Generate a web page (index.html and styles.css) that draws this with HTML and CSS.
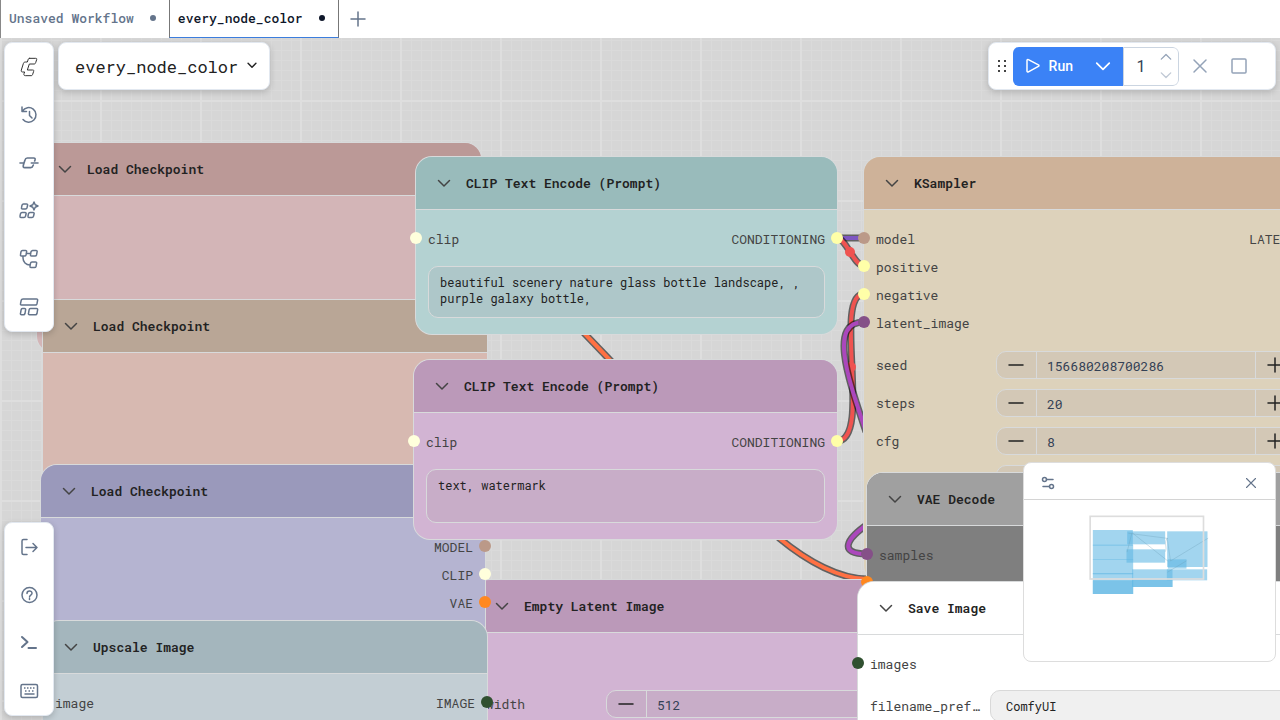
FILE: index.html
```html
<!DOCTYPE html>
<html lang="en">
<head>
<meta charset="utf-8">
<title>every_node_color</title>
<link rel="stylesheet" href="styles.css">
</head>
<body>
<svg class="defs" aria-hidden="true">
  <symbol id="chev" viewBox="0 0 14 14"><path d="M1.5 4.5 7 10l5.500-5.500"/></symbol>
  <symbol id="minus" viewBox="0 0 16 16"><path d="M1 8h14"/></symbol>
  <symbol id="plus" viewBox="0 0 16 16"><path d="M1 8h14M8 1v14"/></symbol>
  <symbol id="close" viewBox="0 0 16 16"><path d="m2 2 12 12M14 2 2 14"/></symbol>
</svg>

<header class="tabs">
  <button class="tab">Unsaved Workflow<span class="tab-dot"></span></button>
  <button class="tab active">every_node_color<span class="tab-dot"></span></button>
  <button class="tab-add" aria-label="New workflow"><svg class="ico16"><use href="#plus"/></svg></button>
</header>

<main class="workspace">
  <div class="canvas">
    <svg class="links" aria-hidden="true">
      <g class="link orange"><path class="edge" d="M562 272 632 345C690 410 750 474 779 500C808 524 840 541 867 541"/><path class="core" d="M562 272 632 345C690 410 750 474 779 500C808 524 840 541 867 541"/></g>
      <g class="link violet"><path class="edge" d="M837 200H864"/><path class="core" d="M837 200H864"/></g>
      <g class="link red"><path class="edge" d="M837 200C846 200 854 228 864 228"/><path class="core" d="M837 200C846 200 854 228 864 228"/><circle cx="850" cy="214" r="5"/></g>
      <g class="link red"><path class="edge" d="M864 256C832 256 873 403 837 403"/><path class="core" d="M864 256C832 256 873 403 837 403"/><circle cx="851" cy="329" r="5"/></g>
      <g class="link purple"><path class="edge" d="M864 284C828 284 848 340 866 394M868 486C846 501 838 516 867 516"/><path class="core" d="M864 284C828 284 848 340 866 394M868 486C846 501 838 516 867 516"/></g>
    </svg>

    <section class="node loader n-red">
      <h2 class="title"><svg class="ico14"><use href="#chev"/></svg>Load Checkpoint</h2>
    </section>
    <section class="node loader n-brown">
      <h2 class="title"><svg class="ico14"><use href="#chev"/></svg>Load Checkpoint</h2>
    </section>

    <section class="node n-latent">
      <h2 class="title"><svg class="ico14"><use href="#chev"/></svg>Empty Latent Image</h2>
      <div class="slots"><div class="slot"></div></div>
      <div class="widgets">
        <div class="widget"><label for="w">width</label><div class="number"><button aria-label="Decrease"><svg class="ico16"><use href="#minus"/></svg></button><input id="w" value="512"><button aria-label="Increase"><svg class="ico16"><use href="#plus"/></svg></button></div></div>
      </div>
    </section>

    <section class="node loader n-blue">
      <h2 class="title"><svg class="ico14"><use href="#chev"/></svg>Load Checkpoint</h2>
      <div class="slots">
        <div class="slot"><span class="out">MODEL<i class="dot model"></i></span></div>
        <div class="slot"><span class="out">CLIP<i class="dot clip"></i></span></div>
        <div class="slot"><span class="out">VAE<i class="dot vae"></i></span></div>
      </div>
    </section>

    <section class="node n-upscale">
      <h2 class="title"><svg class="ico14"><use href="#chev"/></svg>Upscale Image</h2>
      <div class="slots"><div class="slot"><span class="in">image</span><span class="out">IMAGE<i class="dot image"></i></span></div></div>
    </section>

    <section class="node n-teal">
      <h2 class="title"><svg class="ico14"><use href="#chev"/></svg>CLIP Text Encode (Prompt)</h2>
      <div class="slots"><div class="slot"><span class="in"><i class="dot clip"></i>clip</span><span class="out">CONDITIONING<i class="dot cond"></i></span></div></div>
      <div class="prompt"><textarea aria-label="Positive prompt">beautiful scenery nature glass bottle landscape, , purple galaxy bottle,</textarea></div>
    </section>
    <section class="node n-pink">
      <h2 class="title"><svg class="ico14"><use href="#chev"/></svg>CLIP Text Encode (Prompt)</h2>
      <div class="slots"><div class="slot"><span class="in"><i class="dot clip"></i>clip</span><span class="out">CONDITIONING<i class="dot cond"></i></span></div></div>
      <div class="prompt"><textarea aria-label="Negative prompt">text, watermark</textarea></div>
    </section>

    <section class="node n-sampler">
      <h2 class="title"><svg class="ico14"><use href="#chev"/></svg>KSampler</h2>
      <div class="slots">
        <div class="slot"><span class="in"><i class="dot model"></i>model</span><span class="out">LATENT</span></div>
        <div class="slot"><span class="in"><i class="dot cond"></i>positive</span></div>
        <div class="slot"><span class="in"><i class="dot cond"></i>negative</span></div>
        <div class="slot"><span class="in"><i class="dot latent"></i>latent_image</span></div>
      </div>
      <div class="widgets">
        <div class="widget"><label for="seed">seed</label><div class="number"><button aria-label="Decrease"><svg class="ico16"><use href="#minus"/></svg></button><input id="seed" value="156680208700286"><button aria-label="Increase"><svg class="ico16"><use href="#plus"/></svg></button></div></div>
        <div class="widget"><label for="steps">steps</label><div class="number"><button aria-label="Decrease"><svg class="ico16"><use href="#minus"/></svg></button><input id="steps" value="20"><button aria-label="Increase"><svg class="ico16"><use href="#plus"/></svg></button></div></div>
        <div class="widget"><label for="cfg">cfg</label><div class="number"><button aria-label="Decrease"><svg class="ico16"><use href="#minus"/></svg></button><input id="cfg" value="8"><button aria-label="Increase"><svg class="ico16"><use href="#plus"/></svg></button></div></div>
        <div class="widget"><span></span><div class="number select"><svg class="ico14"><use href="#chev"/></svg></div></div>
        <div class="widget"><span></span><div class="number select"><svg class="ico14"><use href="#chev"/></svg></div></div>
        <div class="widget"><span></span><div class="number"></div></div>
      </div>
    </section>

    <section class="node n-decode">
      <h2 class="title"><svg class="ico14"><use href="#chev"/></svg>VAE Decode</h2>
      <div class="slots">
        <div class="slot"><span class="in"><i class="dot latent"></i>samples</span></div>
        <div class="slot"><span class="in"><i class="dot vae"></i>vae</span></div>
      </div>
    </section>

    <section class="node n-save">
      <h2 class="title"><svg class="ico14"><use href="#chev"/></svg>Save Image</h2>
      <div class="slots"><div class="slot"><span class="in"><i class="dot image"></i>images</span></div></div>
      <div class="widgets"><div class="widget"><label for="prefix">filename_prefix</label><input class="text" id="prefix" value="ComfyUI"></div></div>
    </section>
  </div>

  <nav class="sidebar" aria-label="Sidebar">
    <div class="panel group">
      <button aria-label="Menu"><svg class="ico20 dark" viewBox="54 51 60 60"><path d="M86 55h18c3 0 4 1 3 4l-3 9c-1 3-2 4-5 4H85l-6 18h16c3 0 4 1 3 4l-3 9c-1 3-2 4-5 4H73c-4 0-5-2-4-6l2-5h-6c-4 0-5-2-4-6l6-19c1-4 3-5 7-5h5l2-6c1-4 2-5 5-5Z"/></svg></button>
      <button aria-label="Queue"><svg class="ico20" viewBox="0 0 20 20"><path d="M3.500 6A7.300 7.300 0 1 1 4 14.500M3 2v4.500h4.500M10.500 6.500v4L13 13"/></svg></button>
      <button aria-label="Nodes"><svg class="ico20" viewBox="55 338 60 60"><path class="wide" d="M58 368h12M92 368h20M70 368l3-9c1-4 3-6 7-6h19c4 0 5 2 4 6l-1 3M70 368l-2 7c-1 5 0 7 4 7h18c4 0 6-2 7-6l1-2"/></svg></button>
      <button aria-label="Models"><svg class="ico20" viewBox="0 0 20 20"><path d="M4.500 3h3c1 0 1.300.6 1.100 1.300l-.6 2.500c-.2.700-.7 1.200-1.500 1.200h-3c-.9 0-1.200-.6-1-1.300l.5-2.500C3.200 3.500 3.700 3 4.500 3ZM3 11.500h3c1 0 1.300.6 1.100 1.300l-.6 2.500c-.2.700-.7 1.200-1.500 1.200H2c-.9 0-1.200-.6-1-1.300l.5-2.500c.2-.7.700-1.200 1.500-1.200ZM11 11.500h3c1 0 1.300.6 1.100 1.300l-.6 2.500c-.2.700-.7 1.200-1.500 1.200h-3c-.9 0-1.200-.6-1-1.300l.5-2.500c.2-.7.700-1.200 1.500-1.200ZM15 1l1.200 2.800L19 5l-2.800 1.200L15 9l-1.200-2.800L11 5l2.800-1.200Z"/></svg></button>
      <button aria-label="Workflows"><svg class="ico20" viewBox="0 0 20 20"><path d="M3.500 1.500h3c1 0 1.300.6 1.100 1.300L7 6c-.2.700-.7 1-1.500 1h-3c-.9 0-1.200-.6-1-1.300l.5-3c.2-.8.700-1.200 1.500-1.200ZM13.500 1.500h3.500c1 0 1.300.6 1.100 1.300L17.500 6c-.2.700-.7 1-1.500 1h-3.500c-.9 0-1.200-.6-1-1.300l.5-3c.2-.8.700-1.200 2-1.200ZM13 13h3.500c1 0 1.300.6 1.100 1.300L17 17.500c-.2.700-.7 1-1.500 1H12c-.9 0-1.200-.6-1-1.300l.5-3c.2-.8.700-1.200 1.500-1.200ZM7.500 4.500h4M4 7v2c0 4 3 7 7 7"/></svg></button>
      <button aria-label="Templates"><svg class="ico20" viewBox="0 0 20 20"><path d="M4 2h13.500c1 0 1.300.6 1.100 1.300L18 6.700c-.2.700-.7 1.300-1.500 1.300H2.500c-.9 0-1.200-.6-1-1.300l.7-3.400C2.400 2.500 3 2 4 2ZM3.500 11.500h2c1 0 1.300.6 1.100 1.300L6 16.500c-.2.700-.7 1.300-1.500 1.300h-2c-.9 0-1.200-.6-1-1.300l.6-3.700c.1-.8.600-1.300 1.400-1.300ZM11.500 11.500h6c1 0 1.300.6 1.100 1.300l-.6 3.700c-.2.700-.7 1.300-1.500 1.300h-6c-.9 0-1.200-.6-1-1.300l.6-3.700c.1-.8.600-1.300 1.400-1.300Z"/></svg></button>
    </div>
    <div class="panel group">
      <button aria-label="Sign out"><svg class="ico20" viewBox="0 0 20 20"><path d="M8 2.500H4.500c-1 0-1.500.5-1.500 1.500v12c0 1 .5 1.500 1.500 1.500H8M7 10.500h11M14 6.500l4 4-4 4"/></svg></button>
      <button aria-label="Help"><svg class="ico20" viewBox="0 0 20 20"><circle cx="10.500" cy="10" r="7.500"/><path d="M8 8.500c0-3.300 5-3.300 5-.3 0 2-2.500 1.800-2.500 3.800M10.500 13.500v1"/></svg></button>
      <button aria-label="Console"><svg class="ico20 bold" viewBox="0 0 20 20"><path d="m3 4 5.500 5L3 14M9.500 15H17"/></svg></button>
      <button aria-label="Shortcuts"><svg class="ico20" viewBox="0 0 20 20"><rect x="2" y="3.500" width="16.500" height="13" rx="1.500"/><path class="keys" d="M5 7h11" stroke-dasharray="1.500 1.500"/><path class="keys" d="M6 10h9" stroke-dasharray="1.500 2"/><path d="M6 13h9"/></svg></button>
    </div>
  </nav>

  <button class="panel breadcrumb">every_node_color<svg class="ico10"><use href="#chev"/></svg></button>

  <div class="panel actions">
    <svg class="grip" viewBox="0 0 8 14" aria-hidden="true"><path d="M0 1h2v2H0zM6 1h2v2H6zM0 6h2v2H0zM6 6h2v2H6zM0 11h2v2H0zM6 11h2v2H6z"/></svg>
    <div class="runbox">
      <button class="run"><svg class="ico16" viewBox="0 0 16 16"><path d="M2 2.500c0-.8.700-1.200 1.400-.8l10 5.200c.8.400.8 1.100 0 1.500l-10 5.500c-.7.400-1.400 0-1.400-.8Z"/></svg>Run</button>
      <button class="run-more" aria-label="Run options"><svg class="ico16"><use href="#chev"/></svg></button>
      <div class="count"><input aria-label="Batch count" value="1"><span class="spin"><button aria-label="More"><svg class="ico12 up"><use href="#chev"/></svg></button><button class="off" aria-label="Fewer"><svg class="ico12"><use href="#chev"/></svg></button></span></div>
    </div>
    <button class="plain" aria-label="Cancel"><svg class="ico16"><use href="#close"/></svg></button>
    <button class="plain" aria-label="Stop"><svg class="ico16" viewBox="0 0 16 16"><rect x="1" y="1" width="14" height="14" rx="1"/></svg></button>
  </div>

  <aside class="minimap">
    <div class="map-head">
      <button aria-label="Minimap settings"><svg class="ico14" viewBox="0 0 14 14"><circle cx="3.500" cy="3.500" r="2"/><circle cx="10.500" cy="10.500" r="2"/><path d="M5.500 3.500H12M2 10.500h6.500"/></svg></button>
      <button aria-label="Close minimap"><svg class="ico12"><use href="#close"/></svg></button>
    </div>
    <svg class="map" viewBox="72 150 750 483" aria-hidden="true">
      <g class="map-nodes"><rect x="277" y="240" width="120" height="47"/><rect x="277" y="284" width="121" height="45"/><rect x="277" y="327" width="121" height="46"/><rect x="277" y="369" width="121" height="63"/><rect x="277" y="391" width="121" height="41"/><rect x="380" y="244" width="114" height="39"/><rect x="378" y="298" width="116" height="40"/><rect x="395" y="358" width="121" height="53"/><rect x="396" y="389" width="120" height="22"/><rect x="500" y="244" width="121" height="107"/><rect x="502" y="328" width="56" height="28"/><rect x="499" y="358" width="121" height="33"/></g>
      <path class="map-links" d="m385 250 115 15M397 250l105 83M380 305l14-55M495 304c6-12-6-25 5-39M500 265l10 68 112-68M502 366l55-33"/>
      <rect class="view" x="269" y="199" width="340" height="188"/>
    </svg>
  </aside>
</main>
</body>
</html>
```

FILE: styles.css
```css
* { box-sizing: border-box; }
body {
  margin: 0;
  height: 100vh;
  display: flex;
  flex-direction: column;
  overflow: hidden;
  font-family: "Roboto Mono", "Liberation Mono", monospace;
  font-size: 13px;
  color: #444;
}
button, input, textarea { font: inherit; color: inherit; margin: 0; padding: 0; border: 0; background: none; outline: 0; }
button { display: flex; align-items: center; justify-content: center; }
svg { fill: none; stroke: currentColor; stroke-width: 1.5; stroke-linecap: round; stroke-linejoin: round; flex: none; }
.defs { position: absolute; width: 0; height: 0; }
.ico10 { width: 10px; height: 10px; }
.ico12 { width: 12px; height: 12px; }
.ico14 { width: 14px; height: 14px; }
.ico16 { width: 16px; height: 16px; }
.ico20 { width: 20px; height: 20px; }
.up { transform: rotate(180deg); }

.tabs { display: flex; height: 38px; background: #fff; flex: none; border-left: 1px solid #888; }
.tab { gap: 16px; padding: 0 13px 2px 8px; color: #64748b; font-weight: 500; white-space: nowrap; }
.tab.active { color: #0f172a; border: solid #777; border-width: 0 1px 1px; border-bottom-color: #3b7ddd; padding-bottom: 1px; }
.tab-dot { width: 6px; height: 6px; border-radius: 50%; background: currentColor; }
.tab-add { width: 39px; color: #64748b; }

.workspace { position: relative; flex: 1; overflow: hidden; }
.canvas {
  position: absolute;
  inset: 0;
  overflow: hidden;
  background-color: #d6d6d6;
  background-image:
    linear-gradient(90deg, #dedede 2px, transparent 2px),
    linear-gradient(#dedede 2px, transparent 2px),
    linear-gradient(90deg, #dadada 1px, transparent 1px),
    linear-gradient(#dadada 1px, transparent 1px);
  background-size: 100px 100px, 100px 100px, 10px 10px, 10px 10px;
  background-position: 0 62px, 0 62px, 1px 2px, 1px 2px;
}
.links { position: absolute; width: 100%; height: 100%; }
.edge { stroke: #000; stroke-opacity: .55; stroke-width: 7; stroke-linecap: butt; }
.core { stroke-width: 4; stroke-linecap: butt; }
.link circle { fill: currentColor; stroke: none; }
.orange { color: #ff7043; }
.violet { color: #7e57c2; }
.red { color: #ef5350; }
.purple { color: #ab47bc; }

.node {
  position: absolute;
  width: 444px;
  border-radius: 16px;
  background: var(--body);
  box-shadow: 0 0 0 1px #d8dadb;
}
.title {
  display: flex;
  align-items: center;
  gap: 15px;
  height: 53px;
  margin: 0;
  padding: 0 22px 0 21px;
  border-bottom: 1px solid #d8dadb;
  border-radius: 16px 16px 0 0;
  background: var(--head);
  color: #222;
  font-size: 13px;
  font-weight: 600;
  white-space: nowrap;
}
.title svg { color: #444; }
.slots { padding: 15px 12px 0; }
.slot { display: flex; height: 28px; align-items: center; }
.in, .out { position: relative; }
.out { margin-left: auto; }
.dot { position: absolute; width: 12px; height: 12px; border-radius: 50%; top: 50%; margin-top: -7px; left: -18px; }
.out .dot { left: auto; right: -18px; }
.model { background: #b98; }
.clip { background: #ffffdc; }
.vae { background: #ff8820; }
.cond { background: #ffffa8; }
.latent { background: #855088; }
.image { background: #305030; }
.widgets { display: grid; gap: 10px; padding: 14px 12px 12px; }
.widget { display: grid; grid-template-columns: 112px 1fr; gap: 8px; align-items: center; }
.widget label { overflow: hidden; text-overflow: ellipsis; white-space: nowrap; }
.number { display: flex; height: 28px; border: 1px solid #d8dadb; border-radius: 10px; background: var(--field); overflow: hidden; }
.number button { width: 39px; padding-right: 2px; color: #222; }
.number input { flex: 1; min-width: 0; padding: 2px 0 0 10px; border: solid #d8dadb; border-width: 0 1px; color: #334155; }
.select { justify-content: flex-end; align-items: center; padding-right: 10px; color: #64748b; }
.prompt { padding: 13px 12px 16px; }
textarea {
  display: block;
  width: 100%;
  height: 52px;
  padding: 7px 11px;
  border: 1px solid #d8dadb;
  border-radius: 10px;
  background: var(--field);
  color: #222;
  font-size: 12px;
  line-height: 16px;
  resize: none;
  overflow: hidden;
}
.n-pink textarea { height: 54px; }
.text { width: 100%; height: 32px; padding: 0 15px; border: 1px solid #d9d9d9; border-radius: 10px; background: var(--field); color: #222; font-size: 12px; }
.loader { min-height: 209px; }
.n-red { left: 37px; top: 105px; --head: #bb9997; --body: #d3b5b7; }
.n-brown { left: 43px; top: 262px; border-radius: 0; --head: #b9a696; --body: #d7b9b1; }
.n-brown .title { border-radius: 0; }
.n-latent { left: 474px; top: 542px; --head: #bb99b9; --body: #d2b4d3; --field: #c8adc8; }
.n-blue { left: 41px; top: 427px; --head: #9a99bb; --body: #b5b4d1; }
.n-upscale { left: 43px; top: 583px; min-height: 209px; --head: #a4b6bd; --body: #c3ced4; }
.n-teal { left: 416px; top: 119px; width: 421px; --head: #99bbbb; --body: #b4d2d2; --field: #aec7c9; }
.n-pink { left: 414px; top: 322px; width: 423px; --head: #bb99b9; --body: #d2b4d3; --field: #c8adc8; }
.n-sampler { left: 864px; top: 119px; --head: #ceb299; --body: #ddd2bb; --field: #d3c8b6; }
.n-decode { left: 867px; top: 435px; min-height: 150px; --head: #a0a0a0; --body: #7f7f7f; }
.n-save { left: 858px; top: 544px; min-height: 240px; --head: #fff; --body: #fff; --field: #f0f0f0; }
.n-save .widgets { padding-top: 12px; }

.panel { background: #fff; border: 1px solid #e2e8f0; border-radius: 8px; box-shadow: 0 2px 6px rgba(0, 0, 0, .18); }
.sidebar { position: absolute; left: 4px; top: 4px; bottom: 4px; display: flex; flex-direction: column; justify-content: space-between; }
.group { width: 50px; color: #64748b; }
.group button { width: 47px; height: 48px; }
.dark { color: #333; stroke-width: 3; }
.wide { stroke-width: 5; }
.keys { stroke-linecap: butt; }
.bold { stroke-width: 2; }
.breadcrumb { position: absolute; left: 58px; top: 4px; height: 48px; padding: 0 12px 0 16px; gap: 9px; color: #222; font-size: 17px; }
.breadcrumb svg { stroke-width: 2; margin-bottom: 3px; }
.actions { position: absolute; right: 4px; top: 4px; height: 48px; display: flex; align-items: center; padding: 0 17px 0 9px; font-family: Roboto, sans-serif; }
.grip { width: 8px; height: 14px; fill: #444; stroke: none; margin-right: 7px; }
.runbox { display: flex; height: 39px; border-radius: 6px; overflow: hidden; margin-right: 9px; }
.run, .run-more { background: #3b82f6; color: #fff; }
.run { gap: 8px; padding: 0 10px 0 12px; font-size: 14px; font-weight: 500; }
.run-more { width: 40px; }
.count { display: flex; border: 1px solid #cbd5e1; border-radius: 0 6px 6px 0; }
.count input { width: 30px; text-align: center; font-size: 16px; color: #334155; padding-left: 4px; }
.spin { display: flex; flex-direction: column; width: 24px; color: #94a3b8; }
.spin button { flex: 1; }
.off { opacity: .6; }
.plain { width: 23px; color: #94a3b8; }
.plain + .plain { margin-left: 16px; margin-right: 8px; }

.minimap { position: absolute; right: 4px; bottom: 58px; width: 253px; background: #fff; border: 1px solid #ddd; border-radius: 8px; overflow: hidden; }
.map-head { display: flex; height: 37px; justify-content: space-between; align-items: center; padding: 4px 18px 0 17px; border-bottom: 1px solid #d4d4d4; color: #64748b; }
.map { display: block; width: 100%; height: 161px; }
.map-nodes { fill: #5eb7e4; fill-opacity: .58; stroke: none; }
.map-links { stroke: #6c9fb8; stroke-opacity: .5; stroke-width: 2; }
.view { stroke: #ddd; stroke-width: 5; stroke-linejoin: miter; }
```
